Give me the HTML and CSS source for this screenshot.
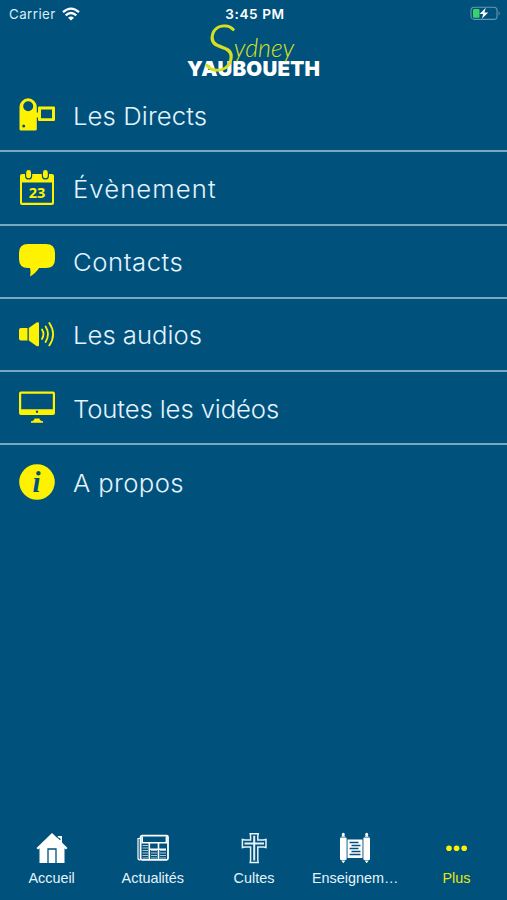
FILE: index.html
```html
<!DOCTYPE html>
<html lang="fr">
<head>
    <meta charset="UTF-8">
    <title>Sydney Yauboueth</title>
    <meta name="viewport" content="width=device-width, initial-scale=1.0">
    <link rel="stylesheet" href="styles.css">
</head>
<body>
    <div class="status">
        <div class="carrier">
            <span>Carrier</span>
            <svg width="18" height="14" viewBox="0 0 18 14" fill="none" stroke="#fff" stroke-width="2.3">
                <path d="M1 5.2 Q9 -2 17 5.2"/>
                <path d="M3.7 8.3 Q9 3.6 14.3 8.3"/>
                <path d="M9 13.6 L6 10.7 Q9 8.4 12 10.7 Z" fill="#fff" stroke="none"/>
            </svg>
        </div>
        <span class="time">3:45 PM</span>
        <svg class="battery" width="31" height="15" viewBox="0 0 31 15">
            <rect x="1" y="1.2" width="26" height="12.2" rx="3.2" fill="none" stroke="#6597b5" stroke-width="1.1"/>
            <path d="M28.6 5 Q30.8 7.3 28.6 9.6 Z" fill="#6597b5"/>
            <rect x="3" y="3" width="6.5" height="8.8" rx="1" fill="#39d467"/>
            <path d="M15.8 1.8 L9.6 8 H13.2 L11.9 12.8 L18.2 6.6 H14.4 Z" fill="#fff"/>
        </svg>
    </div>

    <header>
        <h1 class="logo">
            <span class="first"><span class="initial">S</span>ydney</span>
            <span class="last">YAUBOUETH</span>
        </h1>
    </header>

    <ul class="menu">
        <li>
            <svg class="icon" viewBox="0 0 36 36">
                <path fill-rule="evenodd" d="M0.5 32 V10 A8.6 8.6 0 0 1 17.8 10 V15.5 H19 V10.5 Q19 9.5 20 9.5 H35 Q36 9.5 36 10.5 V23 Q36 24 35 24 H20 Q19 24 19 23 V20.5 H17.8 V32 Q17.8 33.5 16.3 33.5 H2 Q0.5 33.5 0.5 32 Z M9.2 4.3 A5 5 0 1 0 9.2 14.3 A5 5 0 1 0 9.2 4.3 Z M22 12.4 H33 V21.2 H22 Z M4.7 27.5 A1.5 1.5 0 1 0 4.7 30.5 A1.5 1.5 0 1 0 4.7 27.5 Z"/>
            </svg>
            <span class="w-directs">Les Directs</span>
        </li>
        <li>
            <svg class="icon" viewBox="0 0 36 36">
                <path fill-rule="evenodd" d="M3 4 H33 Q35 4 35 6 V33 Q35 35 33 35 H3 Q1 35 1 33 V6 Q1 4 3 4 Z M3 12.5 V32.8 H33 V12.5 Z"/>
                <rect class="ring" x="6.6" y="-0.5" width="6" height="9.4" rx="3"/>
                <rect class="ring" x="23.4" y="-0.5" width="6" height="9.4" rx="3"/>
                <text class="day" x="18" y="28" text-anchor="middle">23</text>
            </svg>
            <span class="w-event">Évènement</span>
        </li>
        <li>
            <svg class="icon" viewBox="0 0 36 36">
                <path d="M9 1 H27 Q36 1 36 10 V16 Q36 25 27 25 H20 Q17 30 11 33.5 Q12 29 11 25 H9 Q0 25 0 16 V10 Q0 1 9 1 Z"/>
            </svg>
            <span class="w-contacts">Contacts</span>
        </li>
        <li>
            <svg class="icon" viewBox="0 0 36 36">
                <path d="M2 12 H8.5 V24.4 H2 Q0 24.4 0 22.4 V14 Q0 12 2 12 Z"/>
                <path d="M9.8 12 L17.5 6.6 Q20 5.4 20 7.5 V29 Q20 31 17.5 29.9 L9.8 24.4 Z"/>
                <g class="waves">
                    <path d="M23 13.5 Q26 18.2 23 22.9"/>
                    <path d="M26.6 10.5 Q31.4 18.2 26.6 26"/>
                    <path d="M30.3 7 Q38 18.2 30.3 29.4"/>
                </g>
            </svg>
            <span class="w-audios">Les audios</span>
        </li>
        <li>
            <svg class="icon" viewBox="0 0 36 36">
                <path fill-rule="evenodd" d="M2 1.5 H34 Q36 1.5 36 3.5 V23 Q36 25 34 25 H2 Q0 25 0 23 V3.5 Q0 1.5 2 1.5 Z M2.2 3.7 V19.3 H33.8 V3.7 Z M18 20.6 A1.2 1.2 0 1 0 18 23 A1.2 1.2 0 1 0 18 20.6 Z"/>
                <path d="M15.5 28.5 H20.5 Q20.5 30.8 24 31.3 V32.8 H12 V31.3 Q15.5 30.8 15.5 28.5 Z"/>
            </svg>
            <span class="w-videos">Toutes les vidéos</span>
        </li>
        <li>
            <svg class="icon" viewBox="0 0 36 36">
                <circle cx="18" cy="18" r="17.8"/>
                <text class="info" x="17.6" y="27.5" text-anchor="middle">i</text>
            </svg>
            <span class="w-propos">A propos</span>
        </li>
    </ul>

    <nav class="tabs">
        <a class="tab">
            <svg width="32" height="32" viewBox="0 0 32 32">
                <path fill="#fff" d="M16 1 L21.8 6.6 V4 H26 V10.6 L31.5 16 L30 17.5 L28.5 16.2 V31 H3.5 V16.2 L2 17.5 L0.5 16 Z"/>
                <path class="line" d="M12 31 V17 H20 V31 M22.2 5.6 L24.4 7.8"/>
            </svg>
            <span>Accueil</span>
        </a>
        <a class="tab">
            <svg width="32" height="32" viewBox="0 0 32 32">
                <rect x="3.6" y="3.6" width="27.4" height="24.2" rx="1.5" fill="none" stroke="#fff" stroke-width="1.8"/>
                <path d="M3 6.5 H1 V26 Q1 28 3.5 28" fill="none" stroke="#fff" stroke-width="1.2"/>
                <path class="gray" d="M5.5 13.5 H11 M5.5 16 H11 M5.5 18.5 H11 M5.5 21 H11 M5.5 23.5 H11 M5.5 26 H11 M14 18.5 H20 M14 21 H20 M14 23.5 H20 M14 26 H20 M23 18.5 H29 M23 21 H29 M23 23.5 H29 M23 26 H29"/>
                <path d="M5.2 4.5 V10.8 H29.4 V4.5 M12.3 11 V27 M21.5 11 V27 M13 17.3 H29" fill="none" stroke="#fff" stroke-width="1.6"/>
            </svg>
            <span>Actualités</span>
        </a>
        <a class="tab">
            <svg width="32" height="32" viewBox="0 0 32 32" fill="none" stroke="#e6f2fa">
                <path stroke-width="1.5" d="M12.2 1.7 H20.2 L19.8 4 V8 H25.5 L28 7.5 V15.5 L25.5 15 H19.8 V28 L20.2 30.5 H12.2 L12.6 28 V15 H7 L4.4 15.5 V7.5 L7 8 H12.6 V4 Z"/>
                <path stroke-width="2" d="M16.2 3.8 V28.5 M6.5 11.5 H26"/>
            </svg>
            <span>Cultes</span>
        </a>
        <a class="tab">
            <svg width="34" height="32" viewBox="0 0 34 32">
                <g fill="#fff">
                    <rect x="2" y="5.5" width="6.6" height="22.5" rx="1"/>
                    <rect x="25.4" y="5.5" width="6.6" height="22.5" rx="1"/>
                    <path d="M3.2 4.8 L4.2 3.4 A1.5 1.5 0 1 1 6.4 3.4 L7.4 4.8 Z M26.6 4.8 L27.6 3.4 A1.5 1.5 0 1 1 29.8 3.4 L30.8 4.8 Z"/>
                    <path d="M3.2 28.6 H7.4 L5.3 31.2 Z M26.6 28.6 H30.8 L28.7 31.2 Z"/>
                    <rect x="9.5" y="7.5" width="15" height="18.5"/>
                </g>
                <path class="line" d="M11.6 10.5 H20.5 M13.5 13.5 H22.5 M11.6 16.5 H20.5 M13.5 19.5 H22.5 M11.6 22.5 H22.5"/>
            </svg>
            <span>Enseignem…</span>
        </a>
        <a class="tab active">
            <svg width="32" height="32" viewBox="0 0 32 32" fill="#fff200">
                <circle cx="9" cy="16.2" r="2.8"/>
                <circle cx="16.6" cy="16.2" r="2.8"/>
                <circle cx="24.2" cy="16.2" r="2.8"/>
            </svg>
            <span>Plus</span>
        </a>
    </nav>
</body>
</html>
```
FILE: styles.css
```css
*{
  box-sizing: border-box;
}
body{
  margin: 0;
  height: 900px;
  display: flex;
  flex-direction: column;
  overflow: hidden;
  background-color: #00527c;
  color: #fff;
  font-family: Inter, "Liberation Sans", sans-serif;
}
.status{
  display: grid;
  grid-template-columns: 1fr auto 1fr;
  align-items: center;
  height: 27px;
  padding: 0 6px 0 9px;
  font-size: 13.3px;
}
.carrier{
  display: flex;
  align-items: center;
  gap: 6px;
  color: #d9ecf7;
  letter-spacing: 0.45px;
}
.time{
  font-weight: 600;
  font-size: 13.6px;
  letter-spacing: 0.6px;
}
.battery{
  justify-self: end;
}
header{
  height: 52px;
  display: flex;
  justify-content: center;
}
.logo{
  position: relative;
  margin: 0;
  padding-top: 31px;
  line-height: 22px;
}
.last{
  display: block;
  font-size: 20.5px;
  font-weight: 900;
  letter-spacing: 0.2px;
}
/* signature lies over the family name */
.first{
  position: absolute;
  left: 17px;
  top: -5px;
  z-index: 1;
  color: #d6e021;
  font-family: Lato, sans-serif;
  font-size: 25px;
  font-weight: 300;
  font-style: italic;
  line-height: 50px;
  white-space: nowrap;
}
.initial{
  font-size: 66px;
  line-height: 0;
  vertical-align: -14px;
  margin-right: -3px;
}
.menu{
  list-style: none;
  margin: 0;
  padding: 0;
}
.menu li{
  display: flex;
  align-items: center;
  gap: 18px;
  height: 73.25px;
  padding-left: 19px;
  border-bottom: 2px solid #7ba8c1;
  color: #e4f3fc;
  font-size: 24px;
  font-weight: 350;
}
.menu li:last-child{
  border-bottom: none;
}
.menu span{
  padding-top: 3px;
  transform: scaleX(1.07);
  transform-origin: left;
}
.w-directs{
  letter-spacing: 0.1px;
}
.w-event{
  letter-spacing: 1px;
}
.w-contacts{
  letter-spacing: 0.5px;
}
.w-videos{
  letter-spacing: -0.1px;
}
.w-propos{
  letter-spacing: 0.35px;
}
.icon{
  width: 36px;
  height: 36px;
  fill: #fff200;
  overflow: visible;
}
.ring{
  stroke: #00527c;
  stroke-width: 1.2;
}
.day{
  font-family: "Open Sans", sans-serif;
  font-size: 14.5px;
  font-weight: 700;
}
.info{
  fill: #00527c;
  font-family: "Liberation Serif", serif;
  font-size: 29px;
  font-weight: 700;
  font-style: italic;
}
.waves{
  fill: none;
  stroke: #fff200;
  stroke-width: 1.8;
  stroke-linecap: round;
}
.tabs{
  display: grid;
  grid-template-columns: repeat(5, 1fr);
  margin-top: auto;
  height: 68px;
  padding-left: 1px;
}
.tab{
  display: flex;
  flex-direction: column;
  align-items: center;
  gap: 5px;
  color: #e4f3fc;
  font-family: "Liberation Sans", Arial, sans-serif;
  font-size: 14.4px;
  line-height: 18px;
}
.active{
  color: #e3e90f;
}
.line{
  fill: none;
  stroke: #00527c;
  stroke-width: 1.3;
}
.gray{
  fill: none;
  stroke: #a9c7d9;
  stroke-width: 1.2;
}
```
